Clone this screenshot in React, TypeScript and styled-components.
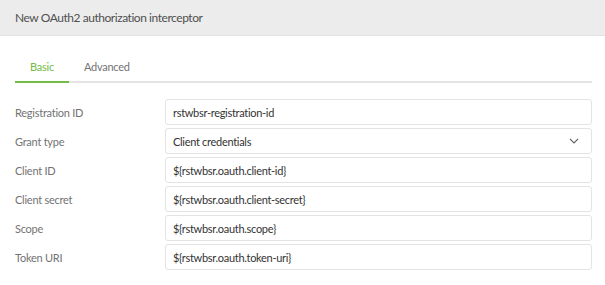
import React from 'react';
import styled, { createGlobalStyle } from 'styled-components';

const Global = createGlobalStyle`
  body {
    margin: 0;
    background: #fff;
    font-family: Lato, 'Noto Sans', sans-serif;
    letter-spacing: -0.25px;
  }
`;

const Dialog = styled.div`
  width: 605px;
  height: 285px;
  overflow: hidden;
`;

const Header = styled.div`
  height: 36px;
  display: flex;
  align-items: center;
  padding-left: 15px;
  background: #ececec;
  border-bottom: 1px solid #e2e2e2;
  box-sizing: border-box;
  color: #505050;
  font-size: 12px;
  letter-spacing: -0.45px;
`;

const Body = styled.div`
  padding: 0 13px 0 15px;
`;

const Tabs = styled.div`
  display: flex;
  margin-top: 18px;
  border-bottom: 2px solid #e4e4e4;
`;

const Tab = styled.div<{ $active?: boolean }>`
  padding: 0 15px;
  min-width: 23px;
  height: 27px;
  line-height: 26px;
  font-size: 11px;
  color: ${p => (p.$active ? '#72bb45' : '#737373')};
  margin-bottom: -2px;
  border-bottom: 2px solid ${p => (p.$active ? '#72bb45' : 'transparent')};
`;

const Form = styled.div`
  display: flex;
  flex-direction: column;
  gap: 3px;
  margin-top: 16px;
`;

const Row = styled.div`
  display: grid;
  grid-template-columns: 150px 1fr;
  align-items: center;
`;

const Label = styled.label`
  font-size: 11px;
  color: #737373;
`;

const Field = styled.div`
  height: 26px;
  box-sizing: border-box;
  border: 1px solid #e3e3e3;
  border-radius: 3px;
  display: flex;
  align-items: center;
  justify-content: space-between;
  padding: 0 12px 0 7px;
  font-size: 11px;
  letter-spacing: -0.3px;
  color: #333;
`;

const Chevron = () => (
  <svg width="10" height="6" viewBox="0 0 10 6" fill="none">
    <path d="M1 1l4 4 4-4" stroke="#666" strokeWidth="1.1" />
  </svg>
);

type FieldDef = { label: string; value: string; select?: boolean };

const FIELDS: FieldDef[] = [
  { label: 'Registration ID', value: 'rstwbsr-registration-id' },
  { label: 'Grant type', value: 'Client credentials', select: true },
  { label: 'Client ID', value: '${rstwbsr.oauth.client-id}' },
  { label: 'Client secret', value: '${rstwbsr.oauth.client-secret}' },
  { label: 'Scope', value: '${rstwbsr.oauth.scope}' },
  { label: 'Token URI', value: '${rstwbsr.oauth.token-uri}' },
];

const App: React.FC = () => (
  <Dialog>
    <Global />
    <Header>New OAuth2 authorization interceptor</Header>
    <Body>
      <Tabs>
        <Tab $active>Basic</Tab>
        <Tab>Advanced</Tab>
      </Tabs>
      <Form>
        {FIELDS.map(f => (
          <Row key={f.label}>
            <Label>{f.label}</Label>
            <Field>
              <span>{f.value}</span>
              {f.select && <Chevron />}
            </Field>
          </Row>
        ))}
      </Form>
    </Body>
  </Dialog>
);

export default App;
